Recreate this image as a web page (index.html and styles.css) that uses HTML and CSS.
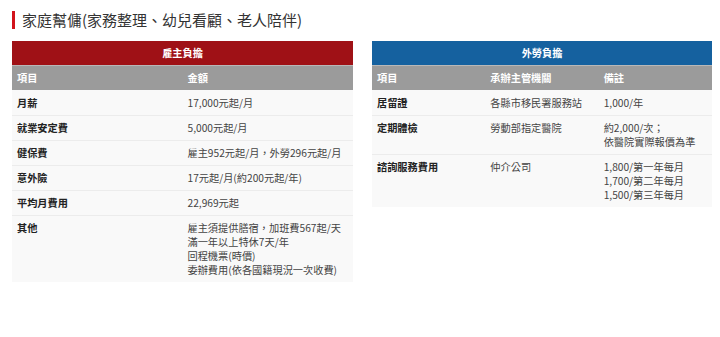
FILE: index.html
```html
<!DOCTYPE html>
<html lang="zh-Hant">
<head>
<meta charset="utf-8">
<link rel="stylesheet" href="styles.css">
</head>
<body>
<div class="page">
  <h1 class="title">家庭幫傭(家務整理、幼兒看顧、老人陪伴)</h1>
  <div class="tables">
    <table class="cost employer">
      <thead>
        <tr class="band"><th colspan="2">雇主負擔</th></tr>
        <tr class="cols"><th class="c2">項目</th><th class="c2">金額</th></tr>
      </thead>
      <tbody>
        <tr><td class="key">月薪</td><td>17,000元起/月</td></tr>
        <tr><td class="key">就業安定費</td><td>5,000元起/月</td></tr>
        <tr><td class="key">健保費</td><td>雇主952元起/月，外勞296元起/月</td></tr>
        <tr><td class="key">意外險</td><td>17元起/月(約200元起/年)</td></tr>
        <tr><td class="key">平均月費用</td><td>22,969元起</td></tr>
        <tr><td class="key">其他</td><td>雇主須提供膳宿，加班費567起/天<br>滿一年以上特休7天/年<br>回程機票(時價)<br>委辦費用(依各國籍現況一次收費)</td></tr>
      </tbody>
    </table>
    <table class="cost worker">
      <thead>
        <tr class="band"><th colspan="3">外勞負擔</th></tr>
        <tr class="cols"><th class="c3">項目</th><th class="c3">承辦主管機關</th><th class="c3">備註</th></tr>
      </thead>
      <tbody>
        <tr><td class="key">居留證</td><td>各縣市移民署服務站</td><td>1,000/年</td></tr>
        <tr><td class="key">定期體檢</td><td>勞動部指定醫院</td><td>約2,000/次；<br>依醫院實際報價為準</td></tr>
        <tr><td class="key">諮詢服務費用</td><td>仲介公司</td><td>1,800/第一年每月<br>1,700/第二年每月<br>1,500/第三年每月</td></tr>
      </tbody>
    </table>
  </div>
</div>
</body>
</html>
```

FILE: styles.css
```css
* { box-sizing: border-box; }
html, body { margin: 0; padding: 0; background: #fff; }
body {
  font-family: "Noto Sans CJK TC", "Noto Sans", sans-serif;
  color: #333;
}
.page {
  padding: 11px 8px 0 12px;
}
.title {
  margin: 0 0 12px 0;
  padding-left: 7px;
  border-left: 3px solid #d2131c;
  font-size: 15px;
  line-height: 18px;
  font-weight: 400;
  color: #333;
}
.tables {
  display: flex;
  align-items: flex-start;
  gap: 19px;
}
.cost {
  border-collapse: collapse;
  table-layout: fixed;
  font-size: 10.2px;
  line-height: 14px;
}
.employer { width: 341px; }
.worker { width: 340px; }
.c2 { width: 50%; }
.c3 { width: 33.33%; }
.band th {
  height: 24px;
  padding: 0 5px;
  text-align: center;
  color: #fff;
  font-weight: 700;
}
.employer .band th { background: #9f1116; }
.worker .band th { background: #15619f; }
.cols th {
  height: 25px;
  padding: 0 5px;
  text-align: left;
  background: #9b9b9b;
  color: #fff;
  font-weight: 700;
  border-top: 1px solid #b8b8b8;
}
.cost td {
  padding: 5px;
  vertical-align: top;
  background: #f9f9f9;
  color: #444;
  border-top: 1px solid #ececec;
}
.cost tbody tr:first-child td { border-top: none; padding-top: 6px; }
.cost td.key {
  font-weight: 700;
  color: #222;
}
```
